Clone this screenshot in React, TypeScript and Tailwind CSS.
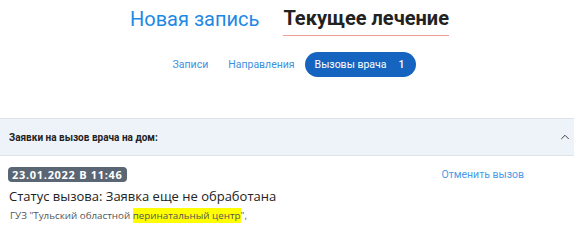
import { ChevronUp } from 'lucide-react'

export default function App() {
  return (
    <div className="w-[579px] h-[228px] bg-white overflow-hidden">
      {/* Main tabs */}
      <div className="flex justify-center gap-[24px] pt-[4px] font-['Roboto',sans-serif]">
        <button className="text-[20px] leading-[28px] text-[#1e88e5] pb-[3px]">Новая запись</button>
        <button className="text-[20px] leading-[28px] font-bold text-[#222] pb-[3px] border-b border-[#f09a9a]">
          Текущее лечение
        </button>
      </div>

      {/* Sub tabs */}
      <div className="flex justify-center items-center mt-[16px] font-['Roboto',sans-serif] text-[10.5px]">
        <button className="px-[10px] text-[#3d8fe0]">Записи</button>
        <button className="px-[10px] text-[#3d8fe0]">Направления</button>
        <button className="h-[25px] pl-[10px] pr-[12px] rounded-full bg-[#1565c0] text-white flex items-center gap-[12px]">
          <span>Вызовы врача</span>
          <span className="font-medium">1</span>
        </button>
      </div>

      {/* Panel */}
      <div className="mt-[41px] mr-[5px]">
        <div className="h-[38px] bg-[#eef3f9] border-y border-[#dde4ea] flex items-center justify-between pl-[9px] pr-[2px] font-['Roboto',sans-serif]">
          <span className="text-[10px] font-bold text-[#222]">Заявки на вызов врача на дом:</span>
          <ChevronUp size={14} strokeWidth={1.6} className="text-[#333]" />
        </div>
        <div className="pl-[8px] pt-[11px] font-['Open_Sans',sans-serif]">
          <div className="flex items-center justify-between pr-[50px]">
            <span className="h-[15px] px-[4px] rounded-[4px] bg-[#5a6673] text-white text-[11px] font-bold tracking-[0.7px] leading-[15px]">
              23.01.2022 В 11:46
            </span>
            <button className="text-[10.5px] text-[#4a9ae8] font-['Roboto',sans-serif]">Отменить вызов</button>
          </div>
          <div className="pl-[1px] mt-[3px] text-[13px] leading-[20px] text-[#222]">
            Статус вызова: Заявка еще не обработана
          </div>
          <div className="pl-[2px] mt-[2px] text-[9.8px] leading-[16px] text-[#555]">
            ГУЗ "Тульский областной <span className="bg-[#ffff00] py-[1px]">перинатальный центр</span>",
          </div>
        </div>
      </div>
    </div>
  )
}
